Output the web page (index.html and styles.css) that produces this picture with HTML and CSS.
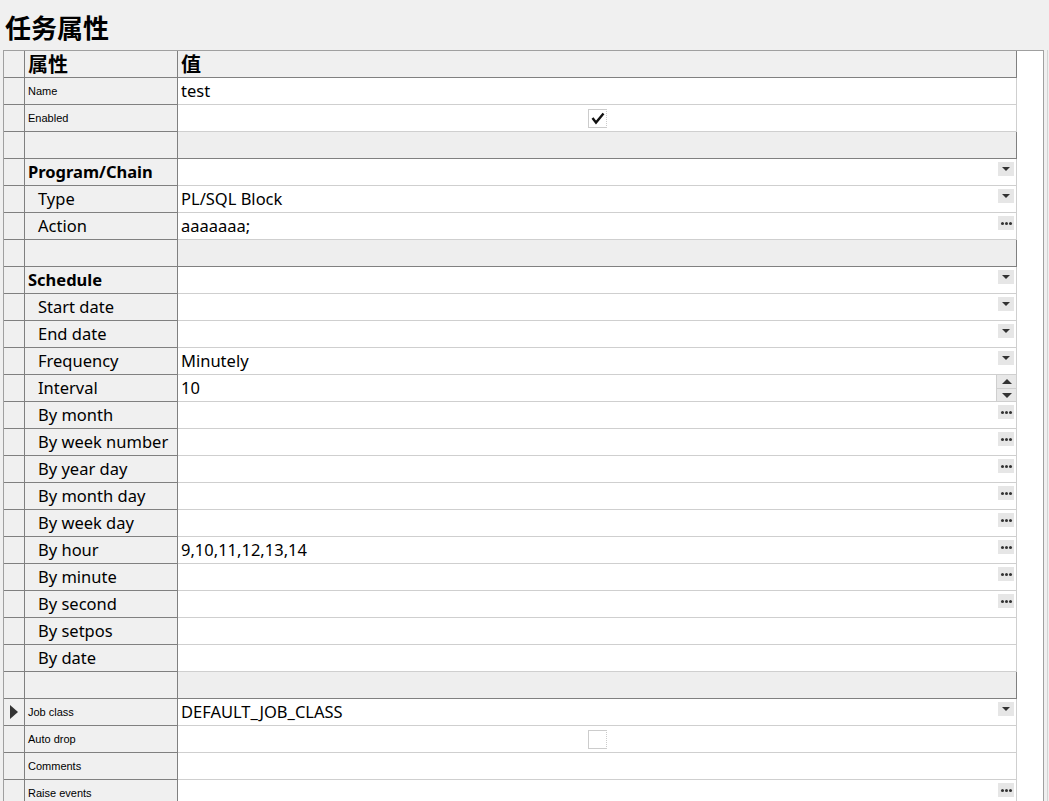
FILE: index.html
```html
<!DOCTYPE html>
<html lang="zh-CN">
<head>
    <meta charset="UTF-8">
    <title>任务属性</title>
    <link rel="stylesheet" href="styles.css">
</head>
<body>
    <h1 class="title">任务属性</h1>

    <div class="frame">
        <div class="grid">
            <div class="row row-head">
                <div class="ind"></div>
                <div class="prop">属性</div>
                <div class="val">值</div>
            </div>

            <div class="row">
                <div class="ind"></div>
                <div class="prop small">Name</div>
                <div class="val"><span class="text">test</span></div>
            </div>
            <div class="row">
                <div class="ind"></div>
                <div class="prop small">Enabled</div>
                <div class="val center">
                    <span class="check">
                        <svg width="14" height="13" viewBox="0 0 14 13"><path d="M1.5 6 L5 10.5 L12.5 1.5" fill="none" stroke="#111" stroke-width="2.4"/></svg>
                    </span>
                </div>
            </div>
            <div class="row row-blank">
                <div class="ind"></div>
                <div class="prop"></div>
                <div class="val"></div>
            </div>

            <div class="row">
                <div class="ind"></div>
                <div class="prop group">Program/Chain</div>
                <div class="val"><span class="text"></span><span class="btn drop"></span></div>
            </div>
            <div class="row">
                <div class="ind"></div>
                <div class="prop sub">Type</div>
                <div class="val"><span class="text">PL/SQL Block</span><span class="btn drop"></span></div>
            </div>
            <div class="row">
                <div class="ind"></div>
                <div class="prop sub">Action</div>
                <div class="val"><span class="text">aaaaaaa;</span><span class="btn more"></span></div>
            </div>
            <div class="row row-blank">
                <div class="ind"></div>
                <div class="prop"></div>
                <div class="val"></div>
            </div>

            <div class="row">
                <div class="ind"></div>
                <div class="prop group">Schedule</div>
                <div class="val"><span class="text"></span><span class="btn drop"></span></div>
            </div>
            <div class="row">
                <div class="ind"></div>
                <div class="prop sub">Start date</div>
                <div class="val"><span class="text"></span><span class="btn drop"></span></div>
            </div>
            <div class="row">
                <div class="ind"></div>
                <div class="prop sub">End date</div>
                <div class="val"><span class="text"></span><span class="btn drop"></span></div>
            </div>
            <div class="row">
                <div class="ind"></div>
                <div class="prop sub">Frequency</div>
                <div class="val"><span class="text">Minutely</span><span class="btn drop"></span></div>
            </div>
            <div class="row">
                <div class="ind"></div>
                <div class="prop sub">Interval</div>
                <div class="val spin-cell">
                    <span class="text">10</span>
                    <span class="spin">
                        <span class="spin-btn"><i class="tri-up"></i></span>
                        <span class="spin-btn"><i class="tri-down"></i></span>
                    </span>
                </div>
            </div>
            <div class="row">
                <div class="ind"></div>
                <div class="prop sub">By month</div>
                <div class="val"><span class="text"></span><span class="btn more"></span></div>
            </div>
            <div class="row">
                <div class="ind"></div>
                <div class="prop sub">By week number</div>
                <div class="val"><span class="text"></span><span class="btn more"></span></div>
            </div>
            <div class="row">
                <div class="ind"></div>
                <div class="prop sub">By year day</div>
                <div class="val"><span class="text"></span><span class="btn more"></span></div>
            </div>
            <div class="row">
                <div class="ind"></div>
                <div class="prop sub">By month day</div>
                <div class="val"><span class="text"></span><span class="btn more"></span></div>
            </div>
            <div class="row">
                <div class="ind"></div>
                <div class="prop sub">By week day</div>
                <div class="val"><span class="text"></span><span class="btn more"></span></div>
            </div>
            <div class="row">
                <div class="ind"></div>
                <div class="prop sub">By hour</div>
                <div class="val"><span class="text">9,10,11,12,13,14</span><span class="btn more"></span></div>
            </div>
            <div class="row">
                <div class="ind"></div>
                <div class="prop sub">By minute</div>
                <div class="val"><span class="text"></span><span class="btn more"></span></div>
            </div>
            <div class="row">
                <div class="ind"></div>
                <div class="prop sub">By second</div>
                <div class="val"><span class="text"></span><span class="btn more"></span></div>
            </div>
            <div class="row">
                <div class="ind"></div>
                <div class="prop sub">By setpos</div>
                <div class="val"></div>
            </div>
            <div class="row">
                <div class="ind"></div>
                <div class="prop sub">By date</div>
                <div class="val"></div>
            </div>
            <div class="row row-blank">
                <div class="ind"></div>
                <div class="prop"></div>
                <div class="val"></div>
            </div>

            <div class="row">
                <div class="ind"><i class="pointer"></i></div>
                <div class="prop small">Job class</div>
                <div class="val"><span class="text">DEFAULT_JOB_CLASS</span><span class="btn drop"></span></div>
            </div>
            <div class="row">
                <div class="ind"></div>
                <div class="prop small">Auto drop</div>
                <div class="val center"><span class="check"></span></div>
            </div>
            <div class="row">
                <div class="ind"></div>
                <div class="prop small">Comments</div>
                <div class="val"></div>
            </div>
            <div class="row">
                <div class="ind"></div>
                <div class="prop small">Raise events</div>
                <div class="val"><span class="text"></span><span class="btn more"></span></div>
            </div>
        </div>
    </div>
</body>
</html>
```

FILE: styles.css
```css
html, body {
    height: 100%;
}
body {
    margin: 0;
    background-color: #f0f0f0;
    font-family: "Noto Sans", "Noto Sans CJK SC", sans-serif;
    color: #000;
    overflow: hidden;
}
.title {
    margin: 0;
    padding: 11px 0 0 5px;
    height: 50px;
    box-sizing: border-box;
    font-family: "Noto Sans CJK SC", sans-serif;
    font-size: 26px;
    font-weight: bold;
    line-height: 32px;
}
.frame {
    margin-left: 3px;
    width: 1041px;
    height: calc(100% - 50px);
    overflow: hidden;
    box-sizing: border-box;
    border: 1px solid #a0a0a0;
    border-bottom: none;
    background: white;
    box-shadow: 3px 0 0 #f0f0f0, 4px 0 0 #d4d4d4;
}
.grid {
    width: 1013px;
}
.row {
    display: flex;
    height: 27px;
}
.row > div {
    box-sizing: border-box;
    height: 27px;
    border-bottom: 1px solid #808080;
    border-right: 1px solid #808080;
}
.ind {
    width: 21px;
    background: #f0f0f0;
    display: flex;
    align-items: center;
    padding-left: 6px;
}
.prop {
    width: 153px;
    background: #f0f0f0;
    padding-left: 3px;
    line-height: 26px;
    font-size: 16.5px;
    white-space: nowrap;
}
.val {
    flex: 1;
    display: flex;
    align-items: flex-start;
    padding-left: 3px;
    padding-right: 2px;
    background: white;
    border-bottom-color: #cfcfcf !important;
    border-right-color: #cfcfcf !important;
    font-size: 16.5px;
    line-height: 26px;
}
.row-head > div,
.row-blank > div {
    border-bottom-color: #808080 !important;
    border-right-color: #808080 !important;
}
.row-head .prop,
.row-head .val {
    font-family: "Noto Sans CJK SC", sans-serif;
    font-size: 20px;
    font-weight: bold;
    background: #f0f0f0;
    padding-left: 3px;
}
.row-blank .val {
    background: #eeeeee;
}
.small {
    font-family: "Liberation Sans", Arial, sans-serif;
    font-size: 11px;
}
.group {
    font-weight: bold;
}
.sub {
    padding-left: 13px;
}
.text {
    flex: 1;
    white-space: nowrap;
}
.center {
    justify-content: center;
    align-items: center;
}
.check {
    width: 19px;
    height: 19px;
    box-sizing: border-box;
    border: 1px solid #cccccc;
    border-right-style: dotted;
    display: flex;
    align-items: center;
    justify-content: center;
    background: white;
}
.btn {
    margin-top: 3px;
    width: 16px;
    height: 14px;
    background: #e6e6e6;
    display: flex;
    align-items: center;
    justify-content: center;
}
.drop::after {
    content: "";
    border-left: 4px solid transparent;
    border-right: 4px solid transparent;
    border-top: 4px solid #333;
}
.more::after {
    content: "";
    width: 3px;
    height: 3px;
    border-radius: 50%;
    background: #333;
    box-shadow: -4px 0 0 #333, 4px 0 0 #333;
}
.spin-cell {
    padding-right: 0;
}
.spin {
    display: flex;
    flex-direction: column;
    width: 19px;
    height: 26px;
    border-left: 1px solid #cfcfcf;
}
.spin-btn {
    height: 13px;
    box-sizing: border-box;
    background: #e8e8e8;
    display: flex;
    align-items: center;
    justify-content: center;
}
.spin-btn + .spin-btn {
    border-top: 1px solid #cfcfcf;
}
.tri-up {
    border-left: 5px solid transparent;
    border-right: 5px solid transparent;
    border-bottom: 5px solid #333;
}
.tri-down {
    border-left: 5px solid transparent;
    border-right: 5px solid transparent;
    border-top: 5px solid #333;
}
.pointer {
    border-top: 7px solid transparent;
    border-bottom: 7px solid transparent;
    border-left: 8px solid #333;
}
```
